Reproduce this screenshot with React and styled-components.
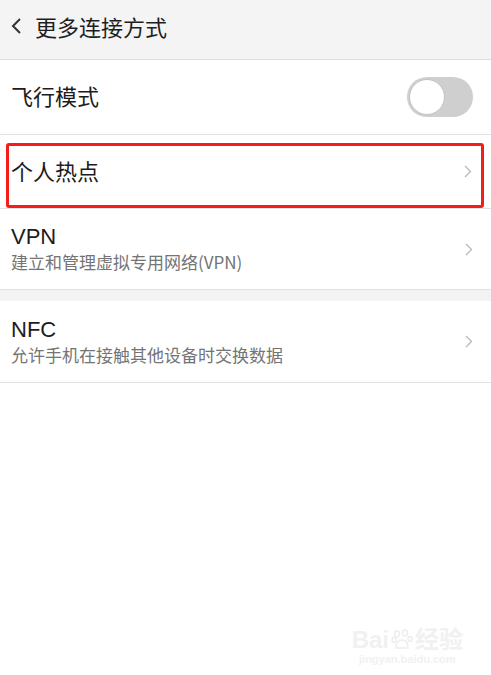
import React, { useState } from "react";
import styled, { createGlobalStyle } from "styled-components";

const GlobalStyle = createGlobalStyle`
  html, body {
    margin: 0;
    padding: 0;
    background: #ffffff;
  }
  body {
    font-family: "Noto Sans CJK SC", "Noto Sans", sans-serif;
    color: #1c1c1c;
  }
`;

const Page = styled.main`
  position: relative;
  width: 491px;
  min-height: 675px;
  background: #ffffff;
  overflow: hidden;
`;

const TopBar = styled.header`
  display: flex;
  align-items: center;
  gap: 13px;
  height: 60px;
  padding: 0 0 8px 10px;
  box-sizing: border-box;
  background: #f4f4f4;
  border-bottom: 1px solid #dddddd;
`;

const Title = styled.h1`
  margin: 0;
  font-size: 22px;
  font-weight: 400;
  line-height: 1;
  color: #1e1e1e;
`;

const Row = styled.section`
  position: relative;
  display: flex;
  align-items: center;
  justify-content: space-between;
  height: ${(p) => p.$height}px;
  padding: 0 ${(p) => p.$padRight}px 0 11px;
  box-sizing: content-box;
  border-bottom: 1px solid #e2e2e2;
`;

const Texts = styled.div`
  display: flex;
  flex-direction: column;
  gap: 4px;
`;

const Label = styled.p`
  margin: 0 0 4px;
  font-size: 22px;
  line-height: 26px;
  color: #1c1c1c;
`;

const Name = styled.p`
  margin: 0;
  font-family: "Liberation Sans", "Noto Sans", sans-serif;
  font-size: 22px;
  line-height: 22px;
  color: #1c1c1c;
`;

const Sub = styled.p`
  margin: 0;
  font-size: 17px;
  line-height: 20px;
  color: #747474;
`;

const Gap = styled.div`
  height: 11px;
  background: #f3f3f3;
`;

const Track = styled.button`
  position: relative;
  width: 66px;
  height: 40px;
  padding: 0;
  border: none;
  border-radius: 20px;
  background: ${(p) => (p.$on ? "#3f9cf4" : "#cfcfcf")};
  cursor: pointer;
`;

const Knob = styled.span`
  position: absolute;
  top: 2px;
  left: ${(p) => (p.$on ? 28 : 2)}px;
  width: 36px;
  height: 36px;
  box-sizing: border-box;
  border-radius: 50%;
  background: #ffffff;
  border: 1px solid #c2c2c2;
  transition: left 0.15s;
`;

const Highlight = styled.div`
  position: absolute;
  top: 8px;
  left: 6px;
  width: 478px;
  height: 65px;
  box-sizing: border-box;
  border: 3px solid #f41d17;
  border-radius: 3px;
  pointer-events: none;
`;

const Watermark = styled.div`
  position: absolute;
  right: 28px;
  bottom: 10px;
  display: flex;
  flex-direction: column;
  align-items: center;
  color: #f1f1f1;
  font-family: "Liberation Sans", "Noto Sans CJK SC", sans-serif;
  pointer-events: none;
`;

const MarkLine = styled.div`
  display: flex;
  align-items: center;
  gap: 2px;
  font-size: ${(p) => p.$size}px;
  font-weight: 700;
  line-height: 1.1;
`;

const BackIcon = () => (
  <svg width="12" height="18" viewBox="0 0 12 18">
    <path d="M10 2 L3 9 L10 16" fill="none" stroke="#333" strokeWidth="2" />
  </svg>
);

const Chevron = () => (
  <svg width="8" height="13" viewBox="0 0 8 13">
    <path d="M1 1 L6.5 6.5 L1 12" fill="none" stroke="#b8b8b8" strokeWidth="1.3" />
  </svg>
);

const Paw = () => (
  <svg width="22" height="22" viewBox="0 0 22 22">
    <g fill="none" stroke="#ededed" strokeWidth="1.5">
      <ellipse cx="6" cy="5" rx="2.5" ry="3" />
      <ellipse cx="14" cy="4" rx="2.5" ry="3" />
      <ellipse cx="3" cy="11" rx="2" ry="2.5" />
      <ellipse cx="19" cy="10" rx="2" ry="2.5" />
      <path d="M5 19 Q5 11 11 11 Q17 11 17 19 Z" />
    </g>
  </svg>
);

const items = [
  { title: "VPN", sub: "建立和管理虚拟专用网络(VPN)", height: 80 },
  { title: "NFC", sub: "允许手机在接触其他设备时交换数据", height: 81 },
];

const App = () => {
  const [airplane, setAirplane] = useState(false);

  return (
    <Page>
      <GlobalStyle />
      <TopBar>
        <BackIcon />
        <Title>更多连接方式</Title>
      </TopBar>

      <Row $height={74} $padRight={18}>
        <Label>飞行模式</Label>
        <Track $on={airplane} onClick={() => setAirplane(!airplane)}>
          <Knob $on={airplane} />
        </Track>
      </Row>

      <Row $height={73} $padRight={19}>
        <Label>个人热点</Label>
        <Chevron />
        <Highlight />
      </Row>

      {items.map((item, index) => (
        <React.Fragment key={item.title}>
          {index > 0 && <Gap />}
          <Row $height={item.height} $padRight={18}>
            <Texts>
              <Name>{item.title}</Name>
              <Sub>{item.sub}</Sub>
            </Texts>
            <Chevron />
          </Row>
        </React.Fragment>
      ))}

      <Watermark>
        <MarkLine $size={24}>
          Bai<Paw />经验
        </MarkLine>
        <MarkLine $size={11}>jingyan.baidu.com</MarkLine>
      </Watermark>
    </Page>
  );
};

export default App;
